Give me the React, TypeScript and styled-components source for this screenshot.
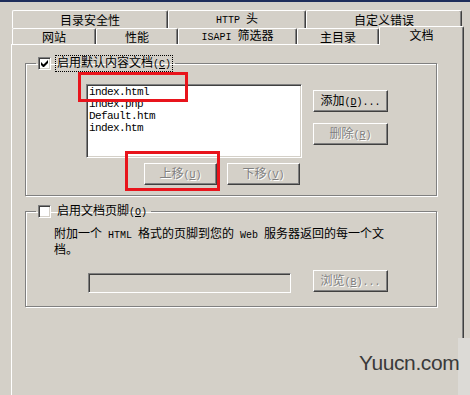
import React from 'react';
import styled, { createGlobalStyle } from 'styled-components';

const GlobalStyle = createGlobalStyle`
  html, body {
    margin: 0;
    padding: 0;
    background: #d4d0c8;
  }
  body {
    font-family: "Noto Sans CJK SC", "Liberation Sans", sans-serif;
    font-size: 12px;
    color: #000;
  }
`;

const Screen = styled.div`
  position: relative;
  width: 470px;
  height: 395px;
  overflow: hidden;
  background: #d4d0c8;
`;

const TitleEdge = styled.div`
  height: 2px;
  background: #1e2d5a;
`;

const Sheet = styled.div`
  display: flex;
  flex-direction: column;
  height: 393px;
  box-sizing: border-box;
  padding: 8px 0 0 11px;
`;

const TabRow = styled.div<{ $height: number }>`
  display: flex;
  height: ${p => p.$height}px;
  padding-left: 1px;
`;

const Tab = styled.div<{ $width: number; $active?: boolean }>`
  position: relative;
  z-index: ${p => (p.$active ? 1 : 0)};
  box-sizing: border-box;
  width: ${p => p.$width}px;
  height: ${p => (p.$active ? 'calc(100% + 3px)' : '100%')};
  margin-top: ${p => (p.$active ? -2 : 0)}px;
  padding-bottom: ${p => (p.$active ? 3 : 0)}px;
  background: #d4d0c8;
  border-top: 1px solid #fff;
  border-left: 1px solid #fff;
  border-right: 1px solid #404040;
  border-radius: 2px 2px 0 0;
  box-shadow: inset -1px 0 0 #808080;
  display: flex;
  align-items: center;
  justify-content: center;
  line-height: 14px;
  white-space: nowrap;
`;

const TabLabel = styled.span`
  white-space: pre;
`;

const Latin = styled.span`
  font-family: "Liberation Mono", monospace;
  font-size: 10px;
`;

const Panel = styled.div`
  flex: 1;
  width: 453px;
  box-sizing: border-box;
  border-top: 1px solid #fff;
  border-left: 1px solid #fff;
  border-right: 1px solid #404040;
  box-shadow: inset -1px 0 0 #808080;
  padding: 11px 0 0 13px;
`;

const Group = styled.fieldset<{ $gap?: number; $bottom: number }>`
  margin: ${p => p.$gap ?? 0}px 0 0;
  padding: 0 0 ${p => p.$bottom}px;
  width: 412px;
  min-width: 0;
  box-sizing: border-box;
  border: 1px solid #808080;
  box-shadow: 1px 1px 0 #fff, inset 1px 1px 0 #fff;
`;

const Legend = styled.legend`
  margin-left: 10px;
  padding: 0 2px;
`;

const LegendInner = styled.span`
  display: flex;
  align-items: center;
  gap: 4px;
  height: 14px;
`;

const CheckBox = styled.span`
  display: flex;
  align-items: center;
  justify-content: center;
  width: 13px;
  height: 13px;
  box-sizing: border-box;
  background: #fff;
  border-top: 1px solid #808080;
  border-left: 1px solid #808080;
  border-right: 1px solid #fff;
  border-bottom: 1px solid #fff;
  box-shadow: inset 1px 1px 0 #404040, inset -1px -1px 0 #d4d0c8;
`;

const CheckLabel = styled.span<{ $focused?: boolean }>`
  line-height: 12px;
  padding: 0 1px;
  border: 1px ${p => (p.$focused ? 'dotted #000' : 'solid transparent')};
  white-space: nowrap;
`;

const DocsBody = styled.div`
  display: flex;
  margin-top: 14px;
  padding-left: 60px;
`;

const ListColumn = styled.div`
  position: relative;
  width: 216px;
`;

const ListBox = styled.ul`
  list-style: none;
  margin: 0;
  height: 74px;
  box-sizing: border-box;
  padding: 1px 2px 0;
  background: #fff;
  border-top: 1px solid #808080;
  border-left: 1px solid #808080;
  border-right: 1px solid #fff;
  border-bottom: 1px solid #fff;
  box-shadow: inset 1px 1px 0 #404040, inset -1px -1px 0 #d4d0c8;
`;

const ListItem = styled.li`
  height: 12px;
  line-height: 12px;
  font-family: "Liberation Mono", monospace;
  font-size: 11px;
  letter-spacing: -0.6px;
  white-space: nowrap;
`;

const MoveRow = styled.div`
  display: flex;
  justify-content: flex-end;
  gap: 10px;
  margin-top: 5px;
  padding-right: 2px;
`;

const SideButtons = styled.div`
  display: flex;
  flex-direction: column;
  gap: 11px;
  margin-left: 11px;
  padding-top: 6px;
`;

const Button = styled.button<{ $width: number }>`
  width: ${p => p.$width}px;
  height: 22px;
  box-sizing: border-box;
  padding: 0;
  background: #d4d0c8;
  border: none;
  border-top: 1px solid #fff;
  border-left: 1px solid #fff;
  border-right: 1px solid #404040;
  border-bottom: 1px solid #404040;
  box-shadow: inset -1px -1px 0 #808080;
  font-family: "Noto Sans CJK SC", sans-serif;
  font-size: 12px;
  line-height: 14px;
  color: #000;
  white-space: nowrap;

  &:disabled {
    color: #808080;
    text-shadow: 1px 1px 0 #fff;
  }
`;

const Highlight = styled.div<{ $x: number; $y: number; $w: number; $h: number }>`
  position: absolute;
  left: ${p => p.$x}px;
  top: ${p => p.$y}px;
  width: ${p => p.$w}px;
  height: ${p => p.$h}px;
  box-sizing: border-box;
  border: 3px solid #e8141c;
  pointer-events: none;
`;

const Description = styled.p`
  margin: 8px 0 0;
  padding-left: 28px;
  width: 336px;
  line-height: 13px;
`;

const FieldRow = styled.div`
  display: flex;
  align-items: flex-start;
  gap: 22px;
  margin-top: 15px;
  padding-left: 62px;
`;

const PathField = styled.input`
  width: 203px;
  height: 20px;
  margin: 3px 0 0;
  box-sizing: border-box;
  padding: 0 3px;
  background: #d4d0c8;
  border-top: 1px solid #808080;
  border-left: 1px solid #808080;
  border-right: 1px solid #fff;
  border-bottom: 1px solid #fff;
  box-shadow: inset 1px 1px 0 #404040, inset -1px -1px 0 #d4d0c8;
  outline: none;
`;

const Watermark = styled.div`
  position: absolute;
  left: 356px;
  top: 338px;
  width: 114px;
  height: 57px;
  box-sizing: border-box;
  padding: 13px 0 0 3px;
  background: linear-gradient(to right, #d4d0c8 0 102px, #dcdad6 102px);
  font-family: "Liberation Sans", Arial, sans-serif;
  font-size: 21px;
  letter-spacing: -0.4px;
  color: #3a3a3a;
`;

const Check = () => (
  <svg width="7" height="7" viewBox="0 0 7 7">
    <path d="M0 2v3l2 2h1l4-4V0L2.5 4.5z" fill="#000" />
  </svg>
);

const backTabs = [
  { w: 156, label: <>目录安全性</> },
  { w: 138, label: <><Latin>HTTP </Latin>头</> },
  { w: 156, label: <>自定义错误</> },
];

const frontTabs = [
  { w: 84, label: <>网站</> },
  { w: 82, label: <>性能</> },
  { w: 119, label: <><Latin>ISAPI </Latin>筛选器</> },
  { w: 82, label: <>主目录</> },
  { w: 85, label: <>文档</>, active: true },
];

const documents = ['index.html', 'index.php', 'Default.htm', 'index.htm'];

export default function App() {
  return (
    <>
      <GlobalStyle />
      <Screen>
        <TitleEdge />
        <Sheet>
          <TabRow $height={18}>
            {backTabs.map((t, i) => (
              <Tab key={i} $width={t.w}>
                <TabLabel>{t.label}</TabLabel>
              </Tab>
            ))}
          </TabRow>
          <TabRow $height={16}>
            {frontTabs.map((t, i) => (
              <Tab key={i} $width={t.w} $active={t.active}>
                <TabLabel>{t.label}</TabLabel>
              </Tab>
            ))}
          </TabRow>
          <Panel>
            <Group $bottom={10}>
              <Legend>
                <LegendInner>
                  <CheckBox><Check /></CheckBox>
                  <CheckLabel $focused>启用默认内容文档<Latin>(<u>C</u>)</Latin></CheckLabel>
                </LegendInner>
              </Legend>
              <DocsBody>
                <ListColumn>
                  <ListBox>
                    {documents.map(d => (
                      <ListItem key={d}>{d}</ListItem>
                    ))}
                  </ListBox>
                  <MoveRow>
                    <Button $width={73} disabled>上移<Latin>(<u>U</u>)</Latin></Button>
                    <Button $width={73} disabled>下移<Latin>(<u>V</u>)</Latin></Button>
                  </MoveRow>
                  <Highlight $x={-8} $y={-12} $w={110} $h={30} />
                  <Highlight $x={39} $y={67} $w={95} $h={40} />
                </ListColumn>
                <SideButtons>
                  <Button $width={75}>添加<Latin>(<u>D</u>)...</Latin></Button>
                  <Button $width={75} disabled>删除<Latin>(<u>R</u>)</Latin></Button>
                </SideButtons>
              </DocsBody>
            </Group>
            <Group $gap={8} $bottom={13}>
              <Legend>
                <LegendInner>
                  <CheckBox />
                  <CheckLabel>启用文档页脚<Latin>(<u>O</u>)</Latin></CheckLabel>
                </LegendInner>
              </Legend>
              <Description>
                附加一个<Latin> HTML </Latin>格式的页脚到您的<Latin> Web </Latin>服务器返回的每一个文档。
              </Description>
              <FieldRow>
                <PathField disabled />
                <Button $width={75} disabled>浏览<Latin>(<u>B</u>)...</Latin></Button>
              </FieldRow>
            </Group>
          </Panel>
        </Sheet>
        <Watermark>Yuucn.com</Watermark>
      </Screen>
    </>
  );
}
